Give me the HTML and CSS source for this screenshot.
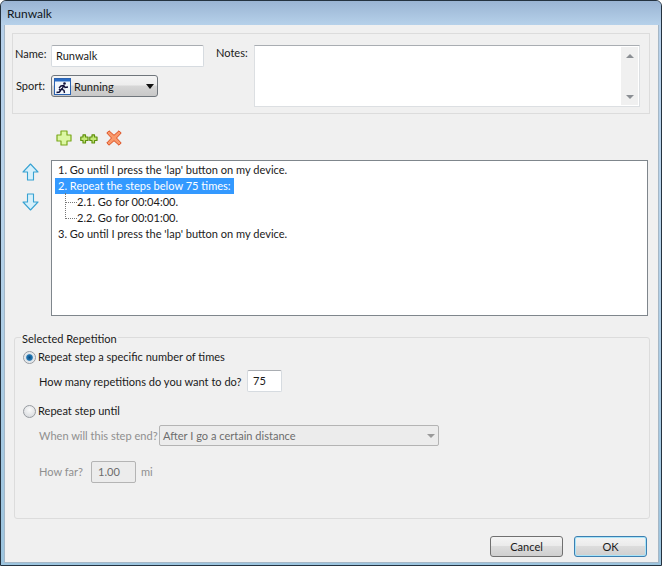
FILE: index.html
```html
<!DOCTYPE html>
<html lang="en">
<head>
<meta charset="utf-8">
<title>Runwalk</title>
<link rel="stylesheet" href="styles.css">
</head>
<body>
<div class="window">
  <div class="titlebar">Runwalk</div>
  <div class="client">
    <section class="top-group">
      <div class="left-fields">
        <div class="field-row">
          <label class="name-label">Name:</label>
          <div class="textbox name-box">Runwalk</div>
        </div>
        <div class="field-row sport-row">
          <label class="sport-label">Sport:</label>
          <div class="sport-select">
            <svg class="sport-icon" width="17" height="17" viewBox="0 0 17 17">
              <rect x="0.5" y="0.5" width="16" height="16" fill="#f2f7fd" stroke="#2a62b0"/>
              <rect x="1" y="1" width="15" height="2.500" fill="#2a6cc4"/>
              <circle cx="10.500" cy="5.500" r="1.300" fill="#10103a"/>
              <path d="M2.500 14.500l3-.5 2-3 2.500 1.500.5 2.500M10 7.500L7 8 5 10M10 7.500L8 11M10 7.500l1 2 3-.5M5 12l1-1" fill="none" stroke="#10103a" stroke-width="1.400"/>
            </svg>
            <span class="sport-text">Running</span>
            <span class="caret"></span>
          </div>
        </div>
      </div>
      <label class="notes-label">Notes:</label>
      <div class="notes-box">
        <div class="scrollbar">
          <span class="arrow-up"></span>
          <span class="arrow-down"></span>
        </div>
      </div>
    </section>

    <div class="toolbar">
      <svg width="16" height="16" viewBox="0 0 16 16"><path d="M5 1h6v4h4v6h-4v4H5v-4H1V5h4z" fill="#dcf7a4" stroke="#7aa81a" stroke-width="1.200" stroke-linejoin="round"/></svg>
      <svg class="double-plus" width="18" height="10" viewBox="0 0 18 10"><path d="M3 .8h2.500V3H8v3.500H5.500v2.500H3V6.500H.8V3H3z" fill="#c4e878" stroke="#5f8f0c" stroke-width="1.200" stroke-linejoin="round"/><path d="M12 .8h2.500V3H17v3.500h-2.500v2.500H12V6.500H9.800V3H12z" fill="#c4e878" stroke="#5f8f0c" stroke-width="1.200" stroke-linejoin="round"/></svg>
      <svg class="delete-icon" width="16" height="16" viewBox="0 0 16 16"><path d="M3 .8L8 5.300 13 .8 15.200 3 10.500 8l4.700 5L13 15.200 8 10.700 3 15.200 .8 13 5.500 8 .8 3z" fill="#f9986a" stroke="#dc4e20" stroke-width="1" stroke-linejoin="round"/></svg>
    </div>

    <div class="steps-area">
      <div class="move-buttons">
        <svg width="17" height="18" viewBox="0 0 17 18"><path d="M8.500 1L16 9h-4.500v8h-6V9H1z" fill="#d6f0fb" stroke="#37a2d2" stroke-width="1.100" stroke-linejoin="round"/></svg>
        <svg width="17" height="18" viewBox="0 0 17 18"><path d="M8.500 17L16 9h-4.500V1h-6v8H1z" fill="#d6f0fb" stroke="#37a2d2" stroke-width="1.100" stroke-linejoin="round"/></svg>
      </div>
      <div class="tree">
        <div class="tree-row">1. Go until I press the 'lap' button on my device.</div>
        <div class="tree-row"><span class="selected">2. Repeat the steps below 75 times:</span></div>
        <div class="tree-children">
          <div class="tree-row child">2.1. Go for 00:04:00.</div>
          <div class="tree-row child last">2.2. Go for 00:01:00.</div>
        </div>
        <div class="tree-row">3. Go until I press the 'lap' button on my device.</div>
      </div>
    </div>

    <section class="rep-group">
      <div class="legend">Selected Repetition</div>
      <div class="radio-row">
        <span class="radio checked"></span>
        <span class="radio-label">Repeat step a specific number of times</span>
      </div>
      <div class="sub-row reps-row">
        <span class="reps-label">How many repetitions do you want to do?</span>
        <div class="textbox reps-box">75</div>
      </div>
      <div class="radio-row until-row">
        <span class="radio"></span>
        <span class="radio-label">Repeat step until</span>
      </div>
      <div class="sub-row disabled end-row">
        <span class="end-label">When will this step end?</span>
        <div class="end-select">After I go a certain distance<span class="caret muted"></span></div>
      </div>
      <div class="sub-row disabled far-row">
        <span class="far-label">How far?</span>
        <div class="far-box">1.00</div>
        <span class="unit">mi</span>
      </div>
    </section>

    <div class="footer">
      <div class="button">Cancel</div>
      <div class="button default">OK</div>
    </div>
  </div>
</div>
</body>
</html>
```
FILE: styles.css
```css
* { box-sizing: border-box; }
html, body { margin: 0; padding: 0; }
body {
  width: 662px;
  height: 566px;
  overflow: hidden;
  background: #fff;
  font-family: "Lato", "Noto Sans", sans-serif;
  font-size: 11.05px;
  color: #1a1a1a;
}
.window {
  width: 662px;
  height: 566px;
  display: flex;
  flex-direction: column;
  border: 1px solid #24323f;
  border-radius: 6px 6px 0 0;
  background: linear-gradient(#9db8d6, #b6d0ea 26px, #b8d3ea 200px, #9cc4de);
  overflow: hidden;
}
.titlebar {
  height: 24px;
  flex: none;
  padding: 4px 0 0 6px;
  font-size: 12px;
  line-height: 18px;
  background: linear-gradient(#9ab4d3, #b6d1ea);
  color: #10161c;
}
.client {
  flex: 1;
  margin: 0 2px 2px 3px;
  background: #f0f0f0;
  border: 1px solid #a5b7c6;
  border-top: 0;
  padding: 8px 8px 0 7px;
  display: flex;
  flex-direction: column;
}
.top-group {
  height: 81px;
  flex: none;
  display: flex;
  border: 1px solid #dcdcdc;
  padding: 11px 9px 6px 2px;
  background: #f0f0f0;
}
.left-fields { width: 201px; flex: none; }
.field-row { display: flex; align-items: center; }
.name-label { width: 36px; margin-top: -5px; }
.sport-label { width: 36px; padding-left: 1px; margin-top: -2px; }
.sport-row { margin-top: 8px; }
.textbox {
  background: #fff;
  border: 1px solid #d6dbe0;
  border-top-color: #a9adb2;
  border-radius: 2px;
  line-height: 20px;
}
.name-box { width: 153px; height: 22px; padding-left: 4px; }
.sport-select {
  width: 107px;
  height: 22px;
  border: 1px solid #70767c;
  border-radius: 3px;
  display: flex;
  align-items: center;
  padding-left: 2px;
  background: linear-gradient(#f4f4f4, #ededed 45%, #d6d6d6 50%, #c8c8c8);
}
.sport-text { margin-left: 3px; flex: 1; }
.caret {
  width: 0;
  height: 0;
  margin-right: 3px;
  margin-left: 6px;
  border-left: 4.500px solid transparent;
  border-right: 4.500px solid transparent;
  border-top: 5px solid #111;
}
.notes-label { width: 38px; line-height: 16px; }
.notes-box {
  flex: 1;
  height: 62px;
  background: #fff;
  border: 1px solid #dcdfe2;
  border-top-color: #a9adb2;
  padding: 1px;
  display: flex;
  justify-content: flex-end;
}
.scrollbar {
  width: 17px;
  height: 58px;
  background: #f0f0f0;
  display: flex;
  flex-direction: column;
  align-items: center;
  justify-content: space-between;
  padding: 7px 0 6px;
}
.arrow-up, .arrow-down { width: 0; height: 0; border-left: 4px solid transparent; border-right: 4px solid transparent; }
.arrow-up { border-bottom: 4px solid #8b8f94; }
.arrow-down { border-top: 4px solid #8b8f94; }
.toolbar {
  height: 46px;
  flex: none;
  display: flex;
  align-items: flex-start;
  padding: 16px 0 0 44px;
}
.double-plus { margin: 4px 0 0 8px; }
.delete-icon { margin-left: 8px; }
.steps-area { display: flex; flex: none; height: 156px; }
.move-buttons {
  width: 39px;
  flex: none;
  padding: 3px 0 0 10px;
  display: flex;
  flex-direction: column;
  gap: 12px;
}
.tree {
  width: 597px;
  height: 156px;
  background: #fff;
  border: 1px solid #7f868c;
  padding: 1px 0 0 2px;
  line-height: 16px;
}
.tree-row { height: 16px; padding-left: 4px; white-space: nowrap; }
.selected { display: inline-block; background: #3399ff; color: #fff; margin-left: -3px; padding: 0 3px 0 3px; height: 16px; }
.child { position: relative; padding-left: 23px; }
.child::before {
  content: "";
  position: absolute;
  left: 11px;
  top: -1px;
  width: 11px;
  height: 9px;
  border-left: 1px dotted #777;
  border-bottom: 1px dotted #777;
}
.child.last::before { top: -8px; height: 16px; }
.rep-group {
  position: relative;
  margin-top: 21px;
  margin-left: 2px;
  height: 182px;
  flex: none;
  border: 1px solid #dcdcdc;
  border-radius: 3px;
  padding: 11px 0 0 8px;
}
.legend {
  position: absolute;
  left: 6px;
  top: -7px;
  background: #f0f0f0;
  padding: 0 1px;
  line-height: 15px;
}
.radio-row { display: flex; align-items: center; height: 16px; gap: 2px; }
.radio-label { margin-top: -2px; }
.radio {
  width: 13px;
  height: 13px;
  border-radius: 50%;
  border: 1px solid #979ba0;
  background: radial-gradient(circle at 50% 35%, #fafafa, #d2d5d9);
}
.radio.checked { background: radial-gradient(circle at 50% 50%, #0a4a80 0, #2378b4 2.800px, #dde3e8 3.800px, #fdfdfd 100%); }
.sub-row { display: flex; align-items: center; margin-left: 16px; white-space: nowrap; }
.reps-row { margin-top: 5px; height: 22px; }
.reps-label { width: 208px; flex: none; }
.reps-box { width: 35px; height: 22px; padding-left: 5px; }
.until-row { margin-top: 11px; }
.disabled { color: #8f8f8f; }
.end-row { margin-top: 6px; height: 21px; }
.end-label { width: 120px; flex: none; }
.end-select {
  width: 280px;
  height: 21px;
  padding-left: 3px;
  border: 1px solid #b4b4b4;
  border-radius: 2px;
  background: #ececec;
  color: #6d6d6d;
  display: flex;
  align-items: center;
  justify-content: space-between;
}
.caret.muted { border-top-color: #9a9a9a; border-left-width: 4px; border-right-width: 4px; border-top-width: 4px; margin-right: 3px; }
.far-row { margin-top: 15px; height: 22px; }
.far-label { width: 52px; flex: none; margin-top: -2px; }
.far-box {
  width: 45px;
  height: 22px;
  padding-left: 6px;
  line-height: 20px;
  border: 1px solid #b4b4b4;
  border-radius: 2px;
  background: #ececec;
  color: #6d6d6d;
}
.unit { margin-left: 5px; margin-top: -2px; }
.footer {
  flex: 1;
  display: flex;
  justify-content: flex-end;
  align-items: flex-start;
  gap: 11px;
  padding: 17px 3px 0 0;
}
.button {
  width: 73px;
  height: 21px;
  text-align: center;
  line-height: 19px;
  border: 1px solid #707070;
  border-radius: 3px;
  background: linear-gradient(#f4f4f4, #ebebeb 45%, #dcdcdc 50%, #cfcfcf);
}
.button.default { border-color: #3c7fb1; box-shadow: inset 0 0 0 1px #a9e4f8; }
```
